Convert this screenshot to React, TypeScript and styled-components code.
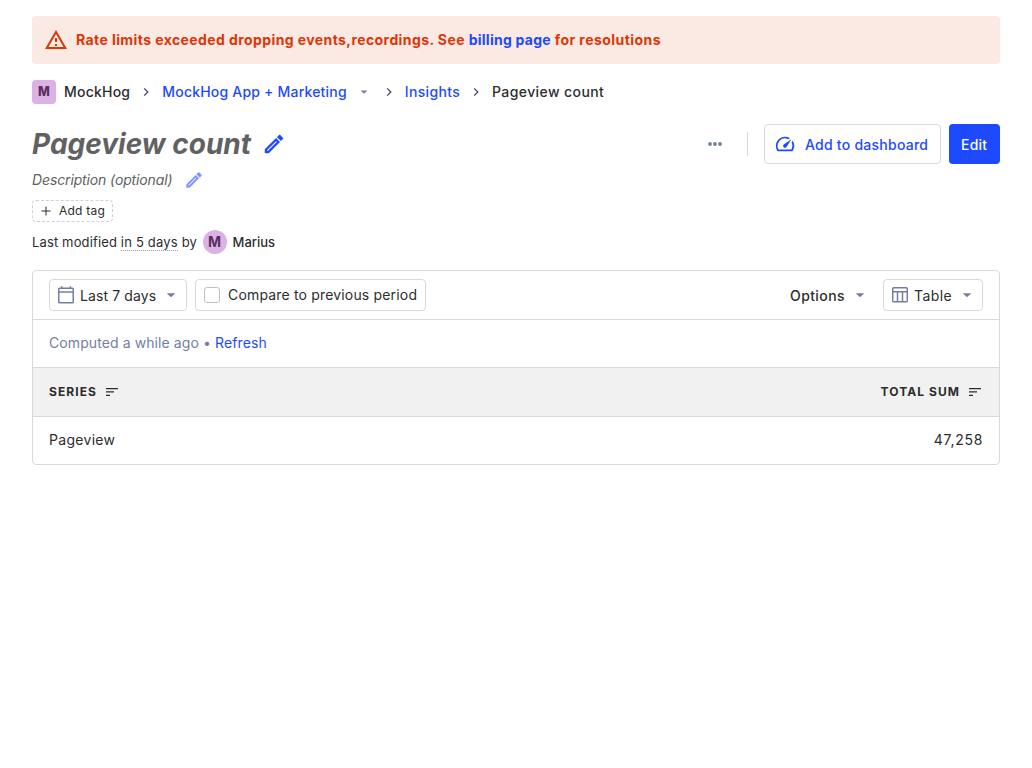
import React from 'react';
import styled, { createGlobalStyle } from 'styled-components';

const Global = createGlobalStyle`
  *, *::before, *::after { box-sizing: border-box; }
  body { margin: 0; background: #fff; color: #2d2d2d; font-family: Inter, "Liberation Sans", sans-serif; font-size: 14px; line-height: 20px; }
  svg { display: block; flex-shrink: 0; }
`;

const Text = styled.span<{ $track: number }>`
  letter-spacing: ${(p) => p.$track}px;
`;
const Scene = styled.main`
  padding: 16px 32px;
  display: flex;
  flex-direction: column;
`;
const Banner = styled.div`
  height: 48px;
  padding: 0 12px;
  display: flex;
  align-items: center;
  gap: 8px;
  border-radius: 4px;
  background: #fbe9e3;
  color: #db3707;
  font-weight: 700;
`;
const Link = styled.a<{ $track?: number }>`
  color: #1d4aff;
  text-decoration: none;
  letter-spacing: ${(p) => p.$track ?? 0}px;
`;
const Breadcrumbs = styled.nav`
  margin-top: 16px;
  height: 24px;
  display: flex;
  align-items: center;
  font-weight: 500;
`;
const Lettermark = styled.span<{ $round?: boolean }>`
  width: 24px;
  height: 24px;
  display: flex;
  align-items: center;
  justify-content: center;
  border-radius: ${(p) => (p.$round ? '50%' : '4px')};
  background: #dcb1e3;
  color: #572e5e;
  font-weight: ${(p) => (p.$round ? 700 : 800)};
  font-size: ${(p) => (p.$round ? 14 : 12.5)}px;
`;
const CrumbName = styled.span`
  margin-left: 8px;
  letter-spacing: 0.22px;
`;
const CaretSlot = styled.span`
  margin: 0 1px 0 9px;
`;
const Separator = styled.span`
  width: 16px;
  margin: 0 8px;
`;
const TitleBar = styled.header`
  margin-top: 20px;
  height: 40px;
  display: flex;
  align-items: center;
  justify-content: space-between;
`;
const TitleGroup = styled.div`
  display: flex;
  align-items: center;
  gap: 11px;
`;
const Title = styled.h1`
  margin: 0;
  font-size: 28px;
  line-height: 40px;
  font-weight: 700;
  font-style: italic;
  color: #616161;
`;
const Actions = styled.div`
  display: flex;
  align-items: center;
`;
const Divider = styled.div`
  width: 1px;
  height: 24px;
  margin: 0 16px 0 20px;
  background: #d9d9d9;
`;
const Button = styled.button<{ $primary?: boolean; $width: number }>`
  height: 40px;
  width: ${(p) => p.$width}px;
  padding: 0 ${(p) => (p.$primary ? 12 : 9)}px;
  margin-left: ${(p) => (p.$primary ? 8 : 0)}px;
  display: flex;
  align-items: center;
  gap: 9px;
  border-radius: 4px;
  border: ${(p) => (p.$primary ? '0' : '1px solid #d9d9d9')};
  background: ${(p) => (p.$primary ? '#1d4aff' : '#fff')};
  color: ${(p) => (p.$primary ? '#fff' : '#1d4aff')};
  font: 500 14px/20px Inter, sans-serif;
  letter-spacing: 0.25px;
  white-space: nowrap;
`;
const ButtonLabel = styled.span`
  padding-top: 1px;
`;
const Description = styled.div`
  margin-top: 6px;
  height: 20px;
  display: flex;
  align-items: center;
  gap: 12px;
  font-style: italic;
  color: #616161;
  letter-spacing: -0.13px;
`;
const AddTag = styled.button`
  margin-top: 10px;
  align-self: flex-start;
  height: 22px;
  padding: 0 7px 0 6px;
  display: flex;
  align-items: center;
  gap: 6px;
  border: 1px dashed #d0d0d0;
  border-radius: 4px;
  background: #fff;
  color: #2d2d2d;
  font: 400 12px/20px Inter, sans-serif;
  letter-spacing: 0.24px;
`;
const Modified = styled.div`
  margin-top: 8px;
  height: 24px;
  display: flex;
  align-items: center;
  font-size: 13px;
  white-space: pre;
  letter-spacing: 0.14px;
`;
const Dotted = styled.span`
  line-height: 16px;
  margin-top: 1px;
  border-bottom: 1px dotted #999;
  letter-spacing: 0.2px;
`;
const Author = styled.span`
  display: flex;
  align-items: center;
  gap: 6px;
  margin-left: 5.5px;
  font-weight: 500;
  letter-spacing: 0;
`;
const Card = styled.section`
  margin-top: 16px;
  border: 1px solid #d9d9d9;
  border-radius: 4px;
  overflow: hidden;
`;
const Row = styled.div<{ $height: number; $last?: boolean }>`
  height: ${(p) => p.$height}px;
  padding: 0 16px;
  display: flex;
  align-items: center;
  justify-content: space-between;
  border-bottom: ${(p) => (p.$last ? '0' : '1px solid #d9d9d9')};
`;
const HeadRow = styled(Row)`
  background: #f1f1f1;
  font-size: 12px;
  font-weight: 700;
  letter-spacing: 1.06px;
`;
const HeadCell = styled.div`
  display: flex;
  align-items: center;
  gap: 7px;
`;
const Group = styled.div`
  display: flex;
  align-items: center;
  gap: 8px;
`;
const Control = styled.div<{ $gap?: number; $width: number; $plain?: boolean }>`
  height: 32px;
  width: ${(p) => p.$width}px;
  padding: 0 7px;
  display: flex;
  align-items: center;
  gap: ${(p) => p.$gap ?? 5}px;
  border: 1px solid ${(p) => (p.$plain ? 'transparent' : '#d9d9d9')};
  border-radius: 4px;
  font-weight: ${(p) => (p.$plain ? 500 : 400)};
  white-space: nowrap;
`;
const ControlLabel = styled.span<{ $track: number }>`
  padding-top: 2px;
  flex: 1;
  letter-spacing: ${(p) => p.$track}px;
`;
const Checkbox = styled.span`
  width: 16px;
  height: 16px;
  margin-left: 1px;
  border: 1px solid #bfbfbf;
  border-radius: 3px;
`;
const Muted = styled.div`
  color: #747ea2;
  margin-top: -2px;
`;
const Cell = styled.span<{ $track: number }>`
  margin-top: -2px;
  letter-spacing: ${(p) => p.$track}px;
`;

const Caret = ({ size = 20 }: { size?: number }) => (
  <svg width={size} height={size} viewBox="0 0 24 24" fill="#747ea2"><path d="M6.8 9.8l5.2 5 5.2-5z" /></svg>
);
const Chevron = () => (
  <svg width="16" height="16" viewBox="0 0 16 16" fill="none" stroke="#3d4a7a" strokeWidth="1.3"><path d="M6.2 4.4L9.8 8l-3.6 3.6" /></svg>
);
const Pencil = ({ size, faded }: { size: number; faded?: boolean }) => (
  <svg width={size} height={size} viewBox="0 0 24 24" fill="#1d4aff" opacity={faded ? 0.6 : 1}>
    <path
      stroke="#1d4aff"
      strokeWidth="0.4"
      d="M14.06 9.02l.92.92L5.92 19H5v-.92l9.06-9.06M17.66 3c-.25 0-.51.1-.7.29l-1.83 1.83 3.75 3.75 1.83-1.83a.996.996 0 0 0 0-1.41l-2.34-2.34c-.2-.2-.45-.29-.71-.29zm-3.6 3.19L3 17.25V21h3.75L17.81 9.94l-3.75-3.75z"
    />
  </svg>
);
const SortIcon = () => (
  <svg width="16" height="16" viewBox="0 0 16 16" fill="#2d2d2d"><path d="M2 4h12v1.3H2zM2 7.3h8v1.3H2zM2 10.7h4V12H2z" /></svg>
);

export default function App() {
  return (
    <Scene>
      <Global />
      <Banner>
        <svg width="24" height="24" viewBox="0 0 24 24" fill="#db3707">
          <path d="M12 5.99L19.53 19H4.47L12 5.99M12 2L1 21h22L12 2zm1 14h-2v2h2v-2zm0-6h-2v4h2v-4z" />
        </svg>
        <span>
          <Text $track={0.41}>Rate limits exceeded dropping events,recordings. See </Text>
          <Link $track={0.26}>billing page</Link>
          <Text $track={0.45}> for resolutions</Text>
        </span>
      </Banner>

      <Breadcrumbs>
        <Lettermark>M</Lettermark>
        <CrumbName>MockHog</CrumbName>
        <Separator><Chevron /></Separator>
        <Link $track={0.2}>MockHog App + Marketing</Link>
        <CaretSlot><Caret size={16} /></CaretSlot>
        <Separator><Chevron /></Separator>
        <Link $track={0.33}>Insights</Link>
        <Separator><Chevron /></Separator>
        <Text $track={0.4}>Pageview count</Text>
      </Breadcrumbs>

      <TitleBar>
        <TitleGroup>
          <Title>Pageview count</Title>
          <Pencil size={24} />
        </TitleGroup>
        <Actions>
          <svg width="24" height="24" viewBox="0 0 24 24" fill="#747ea2">
            <circle cx="7" cy="12" r="1.9" /><circle cx="12" cy="12" r="1.9" /><circle cx="17" cy="12" r="1.9" />
          </svg>
          <Divider />
          <Button $width={177}>
            <svg width="22" height="22" viewBox="0 0 24 24" fill="#1d4aff">
              <path d="M20.38 8.57l-1.23 1.85a8 8 0 0 1-.22 7.58H5.07A8 8 0 0 1 15.58 6.85l1.85-1.23A10 10 0 0 0 3.35 19a2 2 0 0 0 1.72 1h13.85a2 2 0 0 0 1.74-1 10 10 0 0 0-.27-10.44zM10.59 15.41a2 2 0 0 0 2.83 0l5.66-8.49-8.49 5.66a2 2 0 0 0 0 2.83z" />
            </svg>
            <ButtonLabel>Add to dashboard</ButtonLabel>
          </Button>
          <Button $primary $width={51}><ButtonLabel>Edit</ButtonLabel></Button>
        </Actions>
      </TitleBar>

      <Description>Description (optional)<Pencil size={20} faded /></Description>

      <AddTag>
        <svg width="14" height="14" viewBox="0 0 14 14" stroke="#2d2d2d" strokeWidth="1"><path d="M7 2.5v9M2.5 7h9" /></svg>
        Add tag
      </AddTag>

      <Modified>
        {'Last modified '}<Dotted>in 5 days</Dotted>{' by'}
        <Author><Lettermark $round>M</Lettermark>Marius</Author>
      </Modified>

      <Card>
        <Row $height={49}>
          <Group>
            <Control $width={138}>
              <svg width="18" height="20" viewBox="0 0 18 20" fill="none" stroke="#747ea2" strokeWidth="1.5">
                <rect x="1.75" y="3.25" width="14.5" height="14.5" rx="0.8" /><path d="M1.75 7h14.5M4.7 1.2v2M13.3 1.2v2" />
              </svg>
              <ControlLabel $track={0.1}>Last 7 days</ControlLabel><Caret />
            </Control>
            <Control $width={231} $gap={8}><Checkbox /><Text $track={0.17}>Compare to previous period</Text></Control>
          </Group>
          <Group>
            <Control $width={93} $plain><ControlLabel $track={0.4}>Options</ControlLabel><Caret /></Control>
            <Control $width={100}>
              <svg width="18" height="18" viewBox="0 0 18 18" fill="none" stroke="#747ea2" strokeWidth="1.5">
                <rect x="1.75" y="1.75" width="14.5" height="14" rx="1" /><path d="M1.75 5.8h14.5M6.5 5.8v10M11.5 5.8v10" />
              </svg>
              <ControlLabel $track={0.4}>Table</ControlLabel><Caret />
            </Control>
          </Group>
        </Row>
        <Row $height={48}>
          <Muted><Text $track={0.09}>Computed a while ago • </Text><Link $track={0.15}>Refresh</Link></Muted>
        </Row>
        <HeadRow $height={49}>
          <HeadCell>SERIES<SortIcon /></HeadCell>
          <HeadCell>TOTAL SUM<SortIcon /></HeadCell>
        </HeadRow>
        <Row $height={47} $last><Cell $track={0.3}>Pageview</Cell><Cell $track={0.7}>47,258</Cell></Row>
      </Card>
    </Scene>
  );
}
